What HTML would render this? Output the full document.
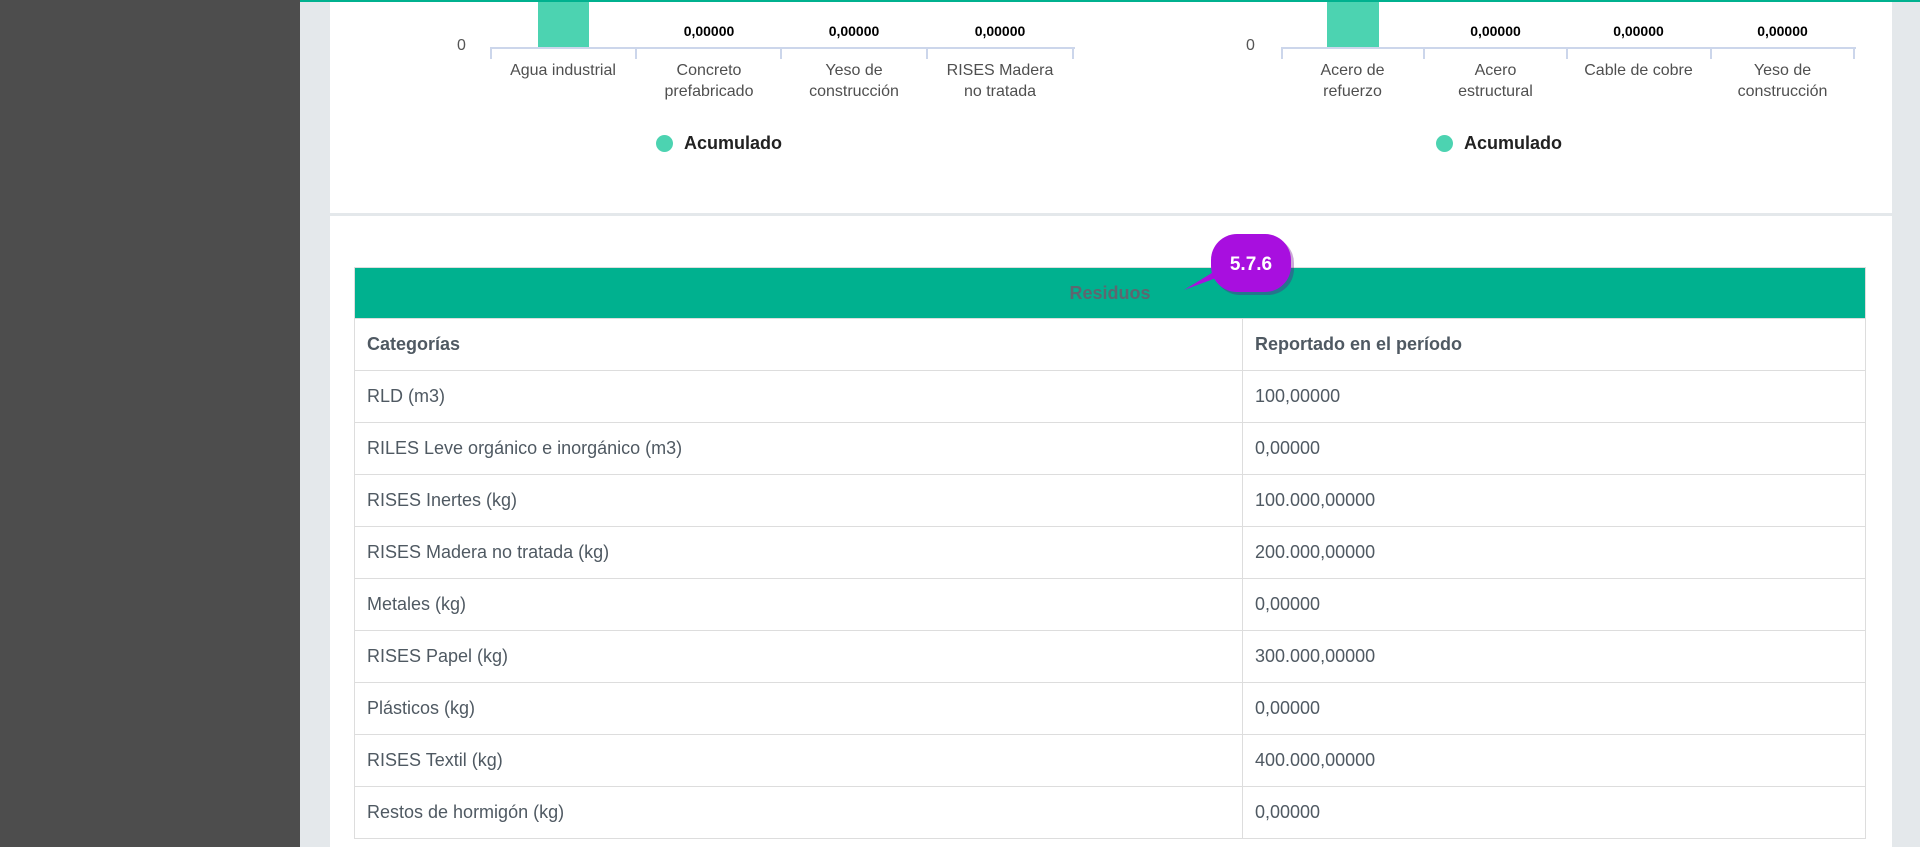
<!DOCTYPE html>
<html><head><meta charset="utf-8"><style>
*{margin:0;padding:0;box-sizing:border-box}
body{width:1920px;height:847px;overflow:hidden;background:#e4e8eb;font-family:"Liberation Sans",sans-serif;position:relative}
.side{position:absolute;left:0;top:0;width:300px;height:847px;background:#4d4d4d}
.topline{position:absolute;left:300px;top:0;width:1620px;height:2px;background:#00b18f}
.card{position:absolute;left:330px;top:2px;width:1562px;height:845px;background:#fff}
.sep{position:absolute;left:330px;top:213px;width:1562px;height:3px;background:#e4e8eb}
.abs{position:absolute}
.lbl{position:absolute;font-size:16px;color:#4f4f4f;text-align:center;line-height:21px;width:146px}
.val{position:absolute;font-size:14px;font-weight:bold;color:#000;text-align:center;width:146px}
.bar{position:absolute;background:#4cd3b1}
.axis{position:absolute;height:2px;background:#ccd6eb}
.tick{position:absolute;width:2px;height:12px;background:#ccd6eb}
.leg{position:absolute;font-size:18px;font-weight:bold;color:#222}
.dot{position:absolute;width:17px;height:17px;border-radius:50%;background:#4cd3b1}
table{position:absolute;left:354px;top:267px;width:1512px;border-collapse:collapse;font-size:18px;color:#4f5962}
th.h{background:#00b18f;height:51px;color:#5d6770;font-weight:bold;text-align:center;border:1px solid #ddd}
td{border:1px solid #ddd;height:52px;padding:0 12px;vertical-align:middle}
tr.c td{font-weight:bold}
</style></head><body>
<div class="side"></div>
<div class="topline"></div>
<div class="card"></div>
<div class="sep"></div>

<div class="abs" style="left:457px;top:37px;font-size:16px;color:#555">0</div>
<div class="bar" style="left:538px;top:2px;width:51px;height:46px"></div>
<div class="axis" style="left:490px;top:47px;width:585px"></div>
<div class="tick" style="left:490px;top:47px"></div><div class="tick" style="left:635px;top:47px"></div><div class="tick" style="left:780px;top:47px"></div><div class="tick" style="left:926px;top:47px"></div><div class="tick" style="left:1072px;top:47px"></div>
<div class="val" style="left:636px;top:23px">0,00000</div><div class="val" style="left:781px;top:23px">0,00000</div><div class="val" style="left:927px;top:23px">0,00000</div>
<div class="lbl" style="left:490px;top:60px">Agua industrial</div>
<div class="lbl" style="left:636px;top:60px">Concreto<br>prefabricado</div>
<div class="lbl" style="left:781px;top:60px">Yeso de<br>construcción</div>
<div class="lbl" style="left:927px;top:60px">RISES Madera<br>no tratada</div>
<div class="dot" style="left:656px;top:135px"></div><div class="leg" style="left:684px;top:133px">Acumulado</div>

<div class="abs" style="left:1246px;top:37px;font-size:16px;color:#555">0</div>
<div class="bar" style="left:1327px;top:2px;width:52px;height:46px"></div>
<div class="axis" style="left:1281px;top:47px;width:575px"></div>
<div class="tick" style="left:1281px;top:47px"></div><div class="tick" style="left:1423px;top:47px"></div><div class="tick" style="left:1566px;top:47px"></div><div class="tick" style="left:1710px;top:47px"></div><div class="tick" style="left:1853px;top:47px"></div>
<div class="val" style="left:1424px;top:23px;width:143px">0,00000</div><div class="val" style="left:1567px;top:23px;width:143px">0,00000</div><div class="val" style="left:1711px;top:23px;width:143px">0,00000</div>
<div class="lbl" style="left:1281px;top:60px;width:143px">Acero de<br>refuerzo</div>
<div class="lbl" style="left:1424px;top:60px;width:143px">Acero<br>estructural</div>
<div class="lbl" style="left:1567px;top:60px;width:143px">Cable de cobre</div>
<div class="lbl" style="left:1711px;top:60px;width:143px">Yeso de<br>construcción</div>
<div class="dot" style="left:1436px;top:135px"></div><div class="leg" style="left:1464px;top:133px">Acumulado</div>

<table>
<tr><th class="h" colspan="2">Residuos</th></tr>
<tr class="c"><td style="width:888px">Categorías</td><td>Reportado en el período</td></tr>
<tr><td>RLD (m3)</td><td>100,00000</td></tr>
<tr><td>RILES Leve orgánico e inorgánico (m3)</td><td>0,00000</td></tr>
<tr><td>RISES Inertes (kg)</td><td>100.000,00000</td></tr>
<tr><td>RISES Madera no tratada (kg)</td><td>200.000,00000</td></tr>
<tr><td>Metales (kg)</td><td>0,00000</td></tr>
<tr><td>RISES Papel (kg)</td><td>300.000,00000</td></tr>
<tr><td>Plásticos (kg)</td><td>0,00000</td></tr>
<tr><td>RISES Textil (kg)</td><td>400.000,00000</td></tr>
<tr><td>Restos de hormigón (kg)</td><td>0,00000</td></tr>
</table>

<svg class="abs" style="left:1180px;top:230px" width="120" height="70">
<path d="M4 60 L36 48 L40 38 Z" fill="#a80fdf"/>
<rect x="34" y="7" width="80" height="58" rx="26" fill="#6a0a8a" opacity=".35"/>
<rect x="31" y="4" width="80" height="58" rx="26" fill="#a80fdf"/>
<text x="71" y="40" text-anchor="middle" font-family="Liberation Sans" font-weight="bold" font-size="19" fill="#fff">5.7.6</text>
</svg>
</body></html>
